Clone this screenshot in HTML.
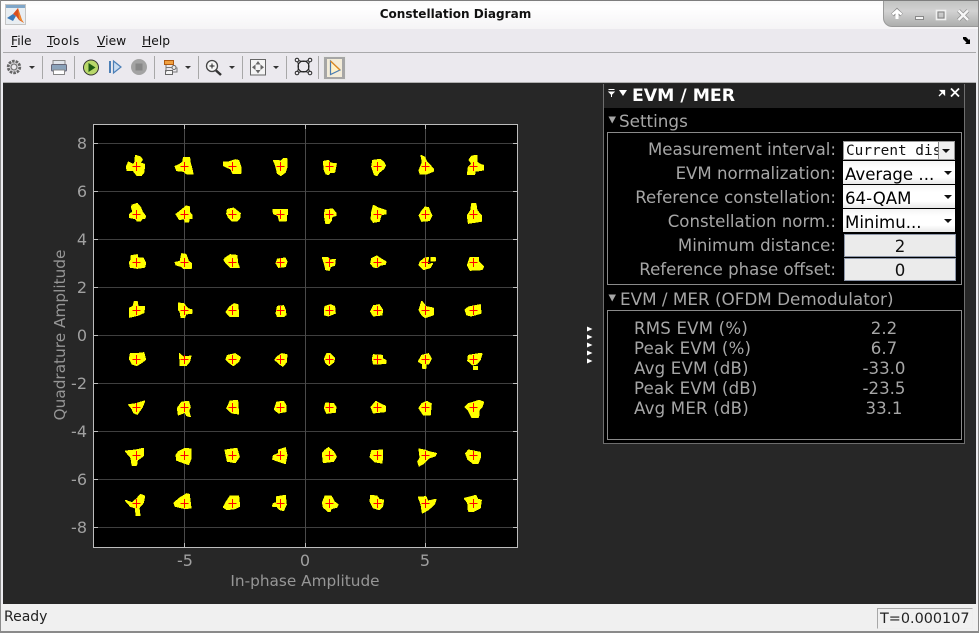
<!DOCTYPE html>
<html><head><meta charset="utf-8"><title>Constellation Diagram</title>
<style>
html,body{margin:0;padding:0;width:979px;height:633px;overflow:hidden;background:#ececf0}
body{position:relative;font-family:"DejaVu Sans","Liberation Sans",sans-serif}
div,span.a{position:absolute;white-space:nowrap}
.l{color:#a6a6a6;font-size:16.6px;line-height:20px;text-align:right;right:143px}
.m{color:#a6a6a6;font-size:16.6px;letter-spacing:.2px;line-height:20px;left:634px}
.v{color:#a6a6a6;font-size:16.6px;line-height:20px;left:804px;width:160px;text-align:center}
.p{left:843px;width:112px;height:23px;background:linear-gradient(#f4f4f4,#fff 30%,#fff 70%,#e8e8e8);color:#000;font-size:16.6px;line-height:27px;text-indent:2px;overflow:hidden}
.p:after{content:"";position:absolute;right:3px;top:10px;border-left:4px solid transparent;border-right:4px solid transparent;border-top:4px solid #111}
.e{left:844px;width:110px;height:21px;background:#ebebeb;border:1px solid #8d96a8;color:#111;font-size:16.6px;line-height:24px;text-align:center}
.t{color:#a0a0a0;font-size:16px;line-height:20px}
.x{color:#969696;font-size:15.3px;line-height:20px}
.menu{font-size:12.3px;line-height:16px;top:33px;color:#111}
.menu u{text-decoration:underline}
.sep{width:1px;height:23px;top:56px;background:#a8a8a8}
.arr{top:66px;width:0;height:0;border-left:3px solid transparent;border-right:3px solid transparent;border-top:3px solid #333}
</style></head><body>
<!-- title bar -->
<div style="left:0;top:0;width:979px;height:29px;background:linear-gradient(#fafafa,#fff 20%,#f5f4f6);border-top:1px solid #7e7e7e;box-sizing:border-box"></div>
<div style="left:0;top:0;width:1px;height:633px;background:#8a8a8a"></div>
<div style="left:978px;top:0;width:1px;height:633px;background:#8a8a8a"></div>
<div style="left:883px;top:1px;width:95px;height:26px;background:linear-gradient(#c2c3c2,#d2d2d2 40%,#adaead);border-bottom-left-radius:9px;border-left:1px solid #9a9a9a;border-bottom:1px solid #9a9a9a;box-sizing:border-box"></div>
<svg style="position:absolute;left:883px;top:1px" width="96" height="28">
<path d="M9.500 14 14 9.500 18.500 14" fill="none" stroke="#8a8a8a" stroke-width="4"/><path d="M9.500 13.500 14 9.500 18.500 13.500" fill="none" stroke="#fff" stroke-width="2.500"/><path d="M14 11V18" stroke="#fff" stroke-width="3"/>
<rect x="32.500" y="15.500" width="8" height="3" fill="#f4f4f4" stroke="#888"/>
<rect x="53.500" y="9.500" width="9" height="9" fill="none" stroke="#f0f0f0" stroke-width="1.600"/><rect x="55" y="11" width="6" height="6" fill="none" stroke="#7f7f7f" stroke-width="1"/>
<path d="M75.500 9.500 85 19M85 9.500 75.500 19" stroke="#8e8e8e" stroke-width="4"/><path d="M75.500 9.500 85 19M85 9.500 75.500 19" stroke="#f6f6f6" stroke-width="2.600"/>
</svg>
<div style="left:0;top:7px;width:911px;text-align:center;font-size:12.050px;font-weight:bold;line-height:15px;color:#111">Constellation Diagram</div>
<svg style="position:absolute;left:5px;top:4px" width="22" height="22">
<rect x=".5" y=".5" width="20" height="20" fill="#e9eef2" stroke="#c4c4c4"/><rect x="1" y="1" width="19" height="3" fill="#7fa6c8"/>
<path d="M2 14 8 10 11 12 8 17Z" fill="#3a79b8"/><path d="M8 10 13 4 17 16 19 19 14 16 11 12Z" fill="#d94f1f"/><path d="M13 4 15 11 17 16 19 19 14 15Z" fill="#f08a2a"/>
</svg>
<!-- menu -->
<div style="left:3px;top:29px;width:973px;height:23px;background:#ebe9ee"></div>
<div class="menu" style="left:11px"><u>F</u>ile</div>
<div class="menu" style="left:47px;letter-spacing:.5px"><u>T</u>ools</div>
<div class="menu" style="left:97px"><u>V</u>iew</div>
<div class="menu" style="left:142px"><u>H</u>elp</div>
<svg style="position:absolute;left:962px;top:36px" width="11" height="10"><path d="M1 1 4 1 7 4 8 3 8 8 3 8 4.500 6.500 1 3Z" fill="#000"/></svg>
<div style="left:3px;top:52px;width:973px;height:1px;background:#a9a9ab"></div>
<!-- toolbar -->
<div style="left:3px;top:53px;width:973px;height:29px;background:#ebe9ee"></div>
<div style="left:3px;top:82px;width:973px;height:1px;background:#b0b0b0"></div>
<div class="sep" style="left:42px"></div><div class="sep" style="left:74px"></div><div class="sep" style="left:154px"></div><div class="sep" style="left:198px"></div><div class="sep" style="left:242px"></div><div class="sep" style="left:286px"></div><div class="sep" style="left:318px"></div>
<div class="arr" style="left:29px"></div><div class="arr" style="left:185px"></div><div class="arr" style="left:229px"></div><div class="arr" style="left:273px"></div>
<svg style="position:absolute;left:0;top:53px" width="350" height="30" fill="none">
<circle cx="14" cy="14" r="5.800" stroke="#666" stroke-width="2.800" stroke-dasharray="2.600 1"/><circle cx="14" cy="14" r="3" stroke="#777" stroke-width="1.300"/>
<rect x="53" y="7.500" width="12" height="4" fill="#e0e4ea" stroke="#888"/><rect x="51.500" y="11.500" width="15" height="6.500" rx="1" fill="#8aa2ba" stroke="#667"/><rect x="53.500" y="17" width="11" height="4.500" fill="#fff" stroke="#888"/>
<circle cx="91" cy="14.500" r="7.500" fill="#b8d86a" stroke="#333" stroke-width="1"/><path d="M88.500 10 95.500 14.500 88.500 19Z" fill="#1d5a12"/>
<path d="M110 8V20" stroke="#4b7fb6" stroke-width="2"/><path d="M113.500 8 121 14 113.500 20Z" fill="#c9dcf0" stroke="#4b7fb6" stroke-width="1.200"/>
<circle cx="139" cy="14" r="8" fill="#a3a3a3"/><rect x="135.500" y="10.500" width="7" height="7" fill="#878787"/>
<rect x="164.500" y="7.500" width="9" height="4" fill="#f0a040" stroke="#b05a10"/><circle cx="174" cy="14.500" r="2" fill="#eee" stroke="#666"/><rect x="165.500" y="17.500" width="7" height="4" fill="#f4f4f4" stroke="#666"/><path d="M166 12V19M166 14.500H172M173 19H177V14.500" stroke="#777"/>
<circle cx="212" cy="13" r="5.500" fill="#f6f6f6" stroke="#444" stroke-width="1.300"/><path d="M209.500 13H214.500M212 10.500V15.500" stroke="#222"/><path d="M216 17.500 221 22" stroke="#333" stroke-width="2.500"/>
<rect x="250.500" y="6.500" width="15" height="15.500" fill="#f4f4f4" stroke="#666"/><path d="M258 8 260.500 11.500H255.500ZM258 20.500 260.500 17H255.500ZM252 14.300 255.500 11.500V17ZM264 14.300 260.500 11.500V17Z" fill="#666"/>
<path d="M297 7Q303.500 10 310 7Q307 13.500 310 20Q303.500 17 297 20Q300 13.500 297 7Z" stroke="#222" stroke-width="1"/><circle cx="303.500" cy="13.500" r="5.500" stroke="#222" stroke-width="1"/>
<circle cx="297" cy="7" r="1.800" fill="#ebe9ee" stroke="#222"/><circle cx="310" cy="7" r="1.800" fill="#ebe9ee" stroke="#222"/><circle cx="297" cy="20" r="1.800" fill="#ebe9ee" stroke="#222"/><circle cx="310" cy="20" r="1.800" fill="#ebe9ee" stroke="#222"/>
<rect x="323.500" y="3.500" width="22" height="23" fill="#a6a6a6" stroke="#e8e8e8"/><rect x="327" y="6" width="15" height="18" fill="#f3ecd8"/><path d="M330.500 8 340 17 330.500 21.500Z" stroke="#4a7cb0" stroke-width="1.200" fill="#fff2c8"/><path d="M330.500 8 340 17" stroke="#e08a20" stroke-width="1.300"/>
</svg>
<!-- dark area -->
<div style="left:3px;top:83px;width:973px;height:521px;background:#272727"></div>
<!-- status -->
<div style="left:1px;top:604px;width:977px;height:27px;background:#f0f0f0"></div>
<div style="left:0;top:631px;width:979px;height:2px;background:#8a8a8a"></div>
<div style="left:4px;top:609px;font-size:14px;line-height:17px;color:#222">Ready</div>
<div style="left:877px;top:608px;width:96px;height:21px;box-sizing:border-box;border:1px solid #a8a8a8;border-right-color:#eee;border-bottom-color:#eee;font-size:14.400px;line-height:20px;color:#222;text-indent:2px">T=0.000107</div>
<!-- plot -->
<svg style="position:absolute;left:0;top:0" width="600" height="604" shape-rendering="crispEdges">
<defs><path id="c" d="M-12 0H12M0-14V14" stroke="#f00" stroke-width="3" fill="none"/></defs>
<rect x="93" y="124" width="424" height="423" fill="#000"/>
<path d="M93 143.500H517M93 191.500H517M93 239.500H517M93 287.500H517M93 335.500H517M93 383.500H517M93 431.500H517M93 479.500H517M93 527.500H517" stroke="#3f3f3f"/>
<path d="M184.500 124V547M305.500 124V547M425.500 124V547" stroke="#4a4a4a"/>
<rect x="93.500" y="124.500" width="424" height="423" fill="none" stroke="#bdbdbd"/>
<path d="M94 143.500H98M94 191.500H98M94 239.500H98M94 287.500H98M94 335.500H98M94 383.500H98M94 431.500H98M94 479.500H98M94 527.500H98M517 143.500H513M517 191.500H513M517 239.500H513M517 287.500H513M517 335.500H513M517 383.500H513M517 431.500H513M517 479.500H513M517 527.500H513M184.500 125V129M305.500 125V129M425.500 125V129M184.500 547V543M305.500 547V543M425.500 547V543" stroke="#bdbdbd"/>
<g fill="#ff0" stroke="#ff0" stroke-width="4" stroke-linejoin="round">
<g transform="translate(136.500,166.500) scale(.3333)"><polygon points="-3,-33 12,-28 17,-20 10,-11 24,-6 22,17 14,27 2,27 -10,12 -28,12 -30,0 -24,-13 -10,-6 -4,-13"/><use href="#c"/></g>
<g transform="translate(184.500,166.500) scale(.3333)"><polygon points="-3,-26 15,-26 17,-10 22,7 25,22 7,22 -3,14 -23,12 -28,0 -15,-6 -5,-13"/><use href="#c"/></g>
<g transform="translate(232.500,166.500) scale(.3333)"><polygon points="-27,-13 -12,-13 8,-20 18,-18 25,2 25,20 1,20 -5,7 -17,2 -27,-3"/><use href="#c"/></g>
<g transform="translate(280.500,166.500) scale(.3333)"><polygon points="-21,-18 -9,-18 1,-16 9,-23 19,-23 19,2 14,17 1,27 -9,20 -13,2 -16,-8"/><use href="#c"/></g>
<g transform="translate(329.500,166.500) scale(.3333)"><polygon points="-18,-15 -3,-18 2,-10 20,-8 15,17 2,17 -3,24 -10,22 -15,12"/><use href="#c"/></g>
<g transform="translate(377.500,166.500) scale(.3333)"><polygon points="-14,-18 8,-21 18,-13 23,-3 18,7 5,17 -2,27 -9,24 -17,0"/><use href="#c"/></g>
<g transform="translate(425.500,166.500) scale(.3333)"><polygon points="-13,-33 -3,-28 4,-13 14,-3 23,7 23,14 4,22 -16,22 -19,12 -9,-13"/><use href="#c"/></g>
<g transform="translate(473.500,166.500) scale(.3333)"><polygon points="-5,-31 10,-33 10,-13 20,-6 30,-3 30,10 5,14 3,24 -18,24 -15,2 -5,-8 -13,-20"/><use href="#c"/></g>

<g transform="translate(136.500,214.500) scale(.3333)"><polygon points="-13,-28 2,-33 12,-21 17,-8 27,5 24,12 17,12 12,19 2,19 -3,12 -20,9 -20,-1 -10,-8 -15,-21"/><use href="#c"/></g>
<g transform="translate(184.500,214.500) scale(.3333)"><polygon points="5,-25 14,-23 14,-8 22,2 22,12 14,12 12,22 2,22 0,12 -15,15 -25,-1 -13,-10 -3,-18"/><use href="#c"/></g>
<g transform="translate(232.500,214.500) scale(.3333)"><polygon points="-15,-15 3,-19 13,-11 23,-3 21,12 13,19 -2,19 -12,9 -17,-3"/><use href="#c"/></g>
<g transform="translate(280.500,214.500) scale(.3333)"><polygon points="-22,-15 21,-15 21,-1 17,0 17,19 -3,19 -7,3 -21,-3"/><use href="#c"/></g>
<g transform="translate(329.500,214.500) scale(.3333)"><polygon points="-13,-14 9,-16 19,-4 19,3 7,6 5,18 -1,26 -11,26 -15,3"/><use href="#c"/></g>
<g transform="translate(377.500,214.500) scale(.3333)"><polygon points="-12,-27 1,-20 25,-12 25,-2 11,0 5,20 -12,23 -19,13 -17,-7"/><use href="#c"/></g>
<g transform="translate(425.500,214.500) scale(.3333)"><polygon points="-1,-22 9,-20 14,-7 19,3 11,18 -11,20 -19,3 -11,-10"/><use href="#c"/></g>
<g transform="translate(473.500,214.500) scale(.3333)"><polygon points="-5,-32 7,-32 10,-12 23,3 23,20 -15,26 -18,3 -8,-12"/><use href="#c"/></g>

<g transform="translate(136.500,262.500) scale(.3333)"><polygon points="-16,-20 2,-23 4,-13 20,-13 27,2 24,14 2,17 -18,14 -21,0 -16,-8"/><use href="#c"/></g>
<g transform="translate(184.500,262.500) scale(.3333)"><polygon points="-8,-26 4,-24 12,-3 20,2 20,17 -3,17 -8,12 -25,7 -28,0 -13,-3"/><use href="#c"/></g>
<g transform="translate(232.500,262.500) scale(.3333)"><polygon points="-22,-13 -7,-23 13,-21 15,2 20,14 -7,14 -19,2 -25,-8"/><use href="#c"/></g>
<g transform="translate(280.500,262.500) scale(.3333)"><polygon points="-9,-10 14,-13 19,-3 14,12 -6,14 -13,2"/><use href="#c"/></g>
<g transform="translate(329.500,262.500) scale(.3333)"><polygon points="-21,-15 -5,-15 -1,-7 17,-9 15,8 2,13 -1,23 -11,21 -15,3"/><use href="#c"/></g>
<g transform="translate(377.500,262.500) scale(.3333)"><polygon points="-17,-12 -2,-19 8,-12 25,-2 23,5 8,8 -2,15 -12,13 -20,3"/><use href="#c"/></g>
<g transform="translate(425.500,262.500) scale(.3333)"><polygon points="-16,-2 -3,-12 9,-15 4,8 21,3 14,15 -6,21 -19,8"/><polygon points="17,-15 29,-15 29,-5 17,-5"/><use href="#c"/></g>
<g transform="translate(473.500,262.500) scale(.3333)"><polygon points="-10,-15 15,-15 15,-2 30,13 25,21 -10,23 -18,8"/><use href="#c"/></g>

<g transform="translate(136.500,310.500) scale(.3333)"><polygon points="-6,-27 2,-27 4,-12 24,-12 22,6 7,13 -20,20 -21,-7 -10,-12"/><use href="#c"/></g>
<g transform="translate(184.500,310.500) scale(.3333)"><polygon points="-18,-22 -3,-20 12,-4 22,-2 22,8 4,10 0,21 -10,21 -13,3 -18,-2"/><use href="#c"/></g>
<g transform="translate(232.500,310.500) scale(.3333)"><polygon points="-9,-10 5,-20 16,-17 18,18 -7,18 -19,5"/><use href="#c"/></g>
<g transform="translate(280.500,310.500) scale(.3333)"><polygon points="-9,-12 9,-14 14,-2 16,13 9,18 -9,18 -13,8 -11,-2"/><use href="#c"/></g>
<g transform="translate(329.500,310.500) scale(.3333)"><polygon points="-13,-12 2,-17 15,-12 17,8 -3,16 -15,13 -15,-2"/><use href="#c"/></g>
<g transform="translate(377.500,310.500) scale(.3333)"><polygon points="-12,-14 5,-17 15,-2 13,13 -12,16 -20,3"/><use href="#c"/></g>
<g transform="translate(425.500,310.500) scale(.3333)"><polygon points="-11,-27 -3,-17 -1,-12 23,-7 23,13 -1,21 -11,13 -19,-2"/><use href="#c"/></g>
<g transform="translate(473.500,310.500) scale(.3333)"><polygon points="-15,-10 20,-17 22,8 -7,16 -20,13 -25,-2"/><use href="#c"/></g>

<g transform="translate(136.500,359.500) scale(.3333)"><polygon points="-18,-17 -3,-17 22,-20 27,0 14,10 0,18 -13,13 -21,-2"/><use href="#c"/></g>
<g transform="translate(184.500,359.500) scale(.3333)"><polygon points="-15,-17 -3,-7 19,-10 15,6 5,18 -13,18 -13,6"/><use href="#c"/></g>
<g transform="translate(232.500,359.500) scale(.3333)"><polygon points="-15,-12 8,-17 23,-7 18,6 3,18 -5,13 -19,0"/><use href="#c"/></g>
<g transform="translate(280.500,359.500) scale(.3333)"><polygon points="-11,-7 4,-17 19,-14 17,8 7,20 -3,13 -16,1"/><use href="#c"/></g>
<g transform="translate(329.500,359.500) scale(.3333)"><polygon points="-8,-17 2,-17 15,-4 12,8 -1,18 -11,10 -15,-2"/><use href="#c"/></g>
<g transform="translate(377.500,359.500) scale(.3333)"><polygon points="-12,-14 15,-12 15,-2 25,3 25,11 5,13 -12,13 -15,-2"/><use href="#c"/></g>
<g transform="translate(425.500,359.500) scale(.3333)"><polygon points="-11,-12 9,-17 17,-2 9,13 1,13 1,26 -8,26 -9,13 -21,6"/><use href="#c"/></g>
<g transform="translate(473.500,359.500) scale(.3333)"><polygon points="-15,-12 15,-17 25,-17 20,0 10,13 -2,16 -17,3"/><polygon points="0,21 12,21 12,30 0,30"/><use href="#c"/></g>

<g transform="translate(136.500,407.500) scale(.3333)"><polygon points="-23,-8 -3,-11 24,-19 17,-1 2,20 -8,16 -13,4"/><use href="#c"/></g>
<g transform="translate(184.500,407.500) scale(.3333)"><polygon points="-8,-16 12,-18 17,-1 12,9 17,27 7,24 2,14 -18,22 -21,2"/><use href="#c"/></g>
<g transform="translate(232.500,407.500) scale(.3333)"><polygon points="-7,-19 15,-21 18,19 -2,16 -17,2 -12,-8"/><use href="#c"/></g>
<g transform="translate(280.500,407.500) scale(.3333)"><polygon points="-11,-16 9,-18 16,-6 16,12 -6,16 -18,6"/><use href="#c"/></g>
<g transform="translate(329.500,407.500) scale(.3333)"><polygon points="-11,-13 12,-11 19,-1 17,14 -8,17 -15,2"/><use href="#c"/></g>
<g transform="translate(377.500,407.500) scale(.3333)"><polygon points="-5,-18 8,-11 23,-4 23,12 -12,16 -19,-1"/><use href="#c"/></g>
<g transform="translate(425.500,407.500) scale(.3333)"><polygon points="-11,-11 4,-18 17,-11 14,22 -6,22 -19,2"/><use href="#c"/></g>
<g transform="translate(473.500,407.500) scale(.3333)"><polygon points="-15,-11 17,-21 30,-16 25,-1 17,6 15,29 -5,29 -15,9 -25,-1"/><use href="#c"/></g>

<g transform="translate(136.500,455.500) scale(.3333)"><polygon points="-33,-13 -3,-16 20,-21 20,1 2,14 0,29 -13,29 -16,7"/><use href="#c"/></g>
<g transform="translate(184.500,455.500) scale(.3333)"><polygon points="-18,-11 2,-21 19,-19 19,9 12,27 -23,14 -25,-1"/><use href="#c"/></g>
<g transform="translate(232.500,455.500) scale(.3333)"><polygon points="-22,-16 -2,-19 13,-21 20,4 8,21 -15,17 -19,-1"/><use href="#c"/></g>
<g transform="translate(280.500,455.500) scale(.3333)"><polygon points="-6,-16 14,-23 19,-1 14,24 -1,19 -23,11 -21,1 -6,-6"/><use href="#c"/></g>
<g transform="translate(329.500,455.500) scale(.3333)"><polygon points="-13,-16 -3,-23 12,-11 20,4 12,17 -18,21 -21,-6"/><use href="#c"/></g>
<g transform="translate(377.500,455.500) scale(.3333)"><polygon points="-17,-14 15,-16 15,4 13,22 -7,19 -22,4"/><use href="#c"/></g>
<g transform="translate(425.500,455.500) scale(.3333)"><polygon points="-19,-19 -3,-16 11,-11 32,-6 29,1 11,7 -6,24 -19,31 -23,19 -16,7"/><use href="#c"/></g>
<g transform="translate(473.500,455.500) scale(.3333)"><polygon points="-15,-16 20,-9 20,7 13,24 0,24 -17,11 -23,-6"/><use href="#c"/></g>

<g transform="translate(136.500,503.500) scale(.3333)"><polygon points="-33,-9 -13,-2 2,-15 12,-27 24,-22 20,-2 7,13 10,36 -1,36 -3,13 -18,8"/><use href="#c"/></g>
<g transform="translate(184.500,503.500) scale(.3333)"><polygon points="-13,-17 7,-29 14,-27 19,13 2,15 -28,8 -31,-2"/><use href="#c"/></g>
<g transform="translate(232.500,503.500) scale(.3333)"><polygon points="-7,-22 18,-22 21,8 8,15 -17,18 -27,11 -17,-7"/><use href="#c"/></g>
<g transform="translate(280.500,503.500) scale(.3333)"><polygon points="-11,-20 14,-24 17,3 9,21 -3,18 -11,8 -24,8 -21,0 -11,-2"/><use href="#c"/></g>
<g transform="translate(329.500,503.500) scale(.3333)"><polygon points="-13,-22 5,-22 15,-4 25,3 22,11 5,15 2,23 -5,23 -18,11 -21,-2"/><use href="#c"/></g>
<g transform="translate(377.500,503.500) scale(.3333)"><polygon points="-20,-24 -2,-22 5,-12 18,-10 15,8 5,18 -12,13 -22,-7"/><use href="#c"/></g>
<g transform="translate(425.500,503.500) scale(.3333)"><polygon points="-21,-19 1,-20 7,-7 31,-12 27,1 9,18 -9,28 -13,3"/><use href="#c"/></g>
<g transform="translate(473.500,503.500) scale(.3333)"><polygon points="-27,-15 7,-24 13,-12 23,-10 20,13 0,23 -15,23 -17,-2"/><use href="#c"/></g>
</g>
<path d="M587 326.500 592.500 329 587 331.500ZM587 334.500 592.500 337 587 339.500ZM587 342.500 592.500 345 587 347.500ZM587 350.500 592.500 353 587 355.500ZM587 358.500 592.500 361 587 363.500Z" fill="#fff" shape-rendering="auto"/>
</svg>
<!-- axis labels -->
<div class="t" style="right:892px;top:134px">8</div>
<div class="t" style="right:892px;top:182px">6</div>
<div class="t" style="right:892px;top:230px">4</div>
<div class="t" style="right:892px;top:278px">2</div>
<div class="t" style="right:892px;top:326px">0</div>
<div class="t" style="right:892px;top:374px">-2</div>
<div class="t" style="right:892px;top:422px">-4</div>
<div class="t" style="right:892px;top:470px">-6</div>
<div class="t" style="right:892px;top:518px">-8</div>
<div class="t" style="left:155px;width:60px;text-align:center;top:551px">-5</div>
<div class="t" style="left:275px;width:60px;text-align:center;top:551px">0</div>
<div class="t" style="left:395px;width:60px;text-align:center;top:551px">5</div>
<div class="x" style="left:155px;width:300px;text-align:center;top:571px">In-phase Amplitude</div>
<div class="x" style="left:-40px;top:325px;width:200px;text-align:center;transform:rotate(-90deg)">Quadrature Amplitude</div>
<!-- panel -->
<div style="left:603px;top:84px;width:362px;height:360px;box-sizing:border-box;border:1px solid #6e6e6e;background:#000"></div>
<div style="left:604px;top:84px;width:360px;height:24px;background:#222"></div>
<div style="left:632px;top:86px;font-size:17.300px;font-weight:bold;line-height:21px;color:#fff">EVM / MER</div>
<svg style="position:absolute;left:605px;top:86px" width="30" height="16"><path d="M3.500 3.500H9.500M4 6H9L6.500 8.500ZM6.500 8V11" stroke="#fff" fill="#fff" stroke-width="1"/><path d="M14 4H22L18 10Z" fill="#fff"/></svg>
<svg style="position:absolute;left:937px;top:87px" width="26" height="12"><path d="M2 9 6 5M3.500 3.500H7.500V7.500Z" stroke="#fff" stroke-width="1.300" fill="#fff"/><path d="M14 1.500 22 9.500M22 1.500 14 9.500" stroke="#fff" stroke-width="1.800"/></svg>
<svg style="position:absolute;left:607px;top:115px" width="10" height="10"><path d="M1.500 1.500H9L5.200 8.500Z" fill="#a6a6a6"/></svg>
<div class="t" style="left:619px;top:111px;font-size:16.800px;color:#a6a6a6">Settings</div>
<div style="left:607px;top:132px;width:355px;height:153px;box-sizing:border-box;border:1px solid #8a8a8a"></div>
<div class="l" style="top:140px">Measurement interval:</div>
<div class="l" style="top:164px">EVM normalization:</div>
<div class="l" style="top:188px">Reference constellation:</div>
<div class="l" style="top:212px">Constellation norm.:</div>
<div class="l" style="top:236px">Minimum distance:</div>
<div class="l" style="top:260px">Reference phase offset:</div>
<div style="left:843px;top:141px;width:112px;height:19px;background:#fff;box-sizing:border-box;border:1px solid #999;overflow:hidden"><span style="font-family:'DejaVu Sans Mono','Liberation Mono',monospace;font-size:14.400px;line-height:19px;color:#111;position:absolute;left:2px;top:0">Current dis</span><span class="a" style="right:0;top:0;width:15px;height:17px;background:#eee;border-left:1px solid #888"></span><span class="a" style="right:4px;top:7px;border-left:4px solid transparent;border-right:4px solid transparent;border-top:4px solid #111"></span></div>
<div class="p" style="top:161px">Average ...</div>
<div class="p" style="top:185px">64-QAM</div>
<div class="p" style="top:209px">Minimu...</div>
<div class="e" style="top:234px">2</div>
<div class="e" style="top:258px">0</div>
<svg style="position:absolute;left:607px;top:293px" width="10" height="10"><path d="M1.500 1.500H9L5.200 8.500Z" fill="#a6a6a6"/></svg>
<div class="t" style="left:620px;top:289px;font-size:16.800px;color:#a6a6a6">EVM / MER (OFDM Demodulator)</div>
<div style="left:607px;top:310px;width:355px;height:130px;box-sizing:border-box;border:1px solid #8a8a8a"></div>
<div class="m" style="top:319px">RMS EVM (%)</div><div class="v" style="top:319px">2.2</div>
<div class="m" style="top:339px">Peak EVM (%)</div><div class="v" style="top:339px">6.7</div>
<div class="m" style="top:359px">Avg EVM (dB)</div><div class="v" style="top:359px">-33.0</div>
<div class="m" style="top:379px">Peak EVM (dB)</div><div class="v" style="top:379px">-23.5</div>
<div class="m" style="top:399px">Avg MER (dB)</div><div class="v" style="top:399px">33.1</div>
</body></html>
